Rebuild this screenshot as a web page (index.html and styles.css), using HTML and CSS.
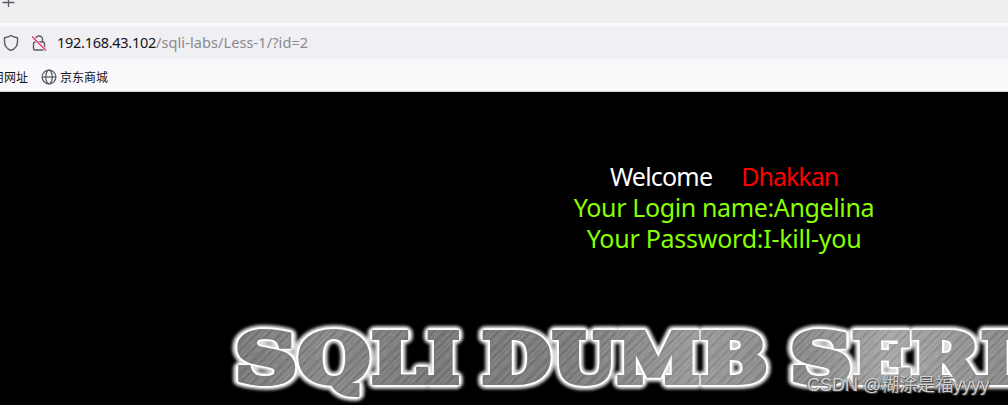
FILE: index.html
```html
<!DOCTYPE html>
<html lang="zh-CN">
<head>
<meta charset="utf-8">
<title>Less-1</title>
<link rel="stylesheet" href="styles.css">
</head>
<body>
<div class="window">
  <header class="tabs">
    <svg class="plus" width="16" height="10" viewBox="0 0 16 10"><path d="M2.500 2.500h12M8.500 -4v11" fill="none" stroke="#5b5b66" stroke-width="1.300"/></svg>
  </header>
  <div class="toolbar">
    <div class="urlbar">
      <svg class="shield" width="16" height="18" viewBox="0 0 16 18"><path d="M8 1.500C6.100 3 3.800 3.500 1.500 3.800V7.800C1.500 12 4 15 8 16.400C12 15 14.500 12 14.500 7.800V3.800C12.200 3.500 9.900 3 8 1.500Z" fill="none" stroke="#5b5b66" stroke-width="1.400" stroke-linejoin="round"/></svg>
      <svg class="lock" width="16" height="18" viewBox="0 0 16 18"><g fill="none" stroke="#5b5b66" stroke-width="1.400"><rect x="2.500" y="8" width="11" height="8" rx="1.500"/><path d="M4.500 8V5.500a3.500 3.500 0 0 1 7 0V8"/></g><path d="M1 2.500L15 16.500" stroke="#f2f0f5" stroke-width="3"/><path d="M1 2.500L15 16.500" stroke="#e8305a" stroke-width="1.300"/></svg>
      <div class="url"><span class="host">192.168.43.102</span><span class="path">/sqli-labs/Less-1/?id=2</span></div>
    </div>
  </div>
  <nav class="bookmarks">
    <span class="bookmark first">用网址</span>
    <svg class="globe" width="16" height="16" viewBox="0 0 16 16"><g fill="none" stroke="#5b5b66" stroke-width="1.300"><circle cx="8" cy="8" r="6.900"/><ellipse cx="8" cy="8" rx="3.200" ry="6.900"/><path d="M1 8h14"/></g></svg>
    <span class="bookmark">京东商城</span>
  </nav>
  <main class="page">
    <div class="greeting">
      <div class="line"><span class="welcome">Welcome</span><span class="name">Dhakkan</span></div>
      <div class="line login">Your Login name:Angelina</div>
      <div class="line password">Your Password:I-kill-you</div>
    </div>
    <svg class="banner" width="1008" height="95" viewBox="0 310 1008 95">
      <defs>
        <linearGradient id="base" gradientUnits="userSpaceOnUse" x1="230" y1="330" x2="1008" y2="385">
          <stop offset="0" stop-color="#777"/><stop offset=".12" stop-color="#868686"/><stop offset=".25" stop-color="#777"/><stop offset=".45" stop-color="#7c7c7c"/><stop offset=".6" stop-color="#999"/><stop offset=".72" stop-color="#858585"/><stop offset=".85" stop-color="#a5a5a5"/><stop offset="1" stop-color="#888"/>
        </linearGradient>
        <pattern id="brush" width="23" height="60" patternUnits="userSpaceOnUse" patternTransform="rotate(45)">
          <path d="M1 0v60M9.500 0v60M17 0v60" stroke="#fff" stroke-opacity=".13" stroke-width=".8"/>
          <path d="M3.500 0v60M12 0v60M20.500 0v60" stroke="#000" stroke-opacity=".1" stroke-width=".8"/>
          <path d="M6 0v60M14.500 0v60" stroke="#fff" stroke-opacity=".18" stroke-width=".5"/>
        </pattern>
        <filter id="glow" x="-5%" y="-30%" width="110%" height="160%"><feGaussianBlur stdDeviation="1.700"/></filter>
        <g id="title">
          <text x="235.500" y="382" textLength="61" lengthAdjust="spacingAndGlyphs">S</text>
          <text x="298.500" y="382" textLength="71" lengthAdjust="spacingAndGlyphs">Q</text>
          <text x="372" y="382" textLength="54.500" lengthAdjust="spacingAndGlyphs">L</text>
          <text x="427.500" y="382" textLength="31.500" lengthAdjust="spacingAndGlyphs">I</text>
          <text x="482.500" y="382" textLength="68" lengthAdjust="spacingAndGlyphs">D</text>
          <text x="553" y="382" textLength="63" lengthAdjust="spacingAndGlyphs">U</text>
          <text x="617.500" y="382" textLength="82" lengthAdjust="spacingAndGlyphs">M</text>
          <text x="700.500" y="382" textLength="66.500" lengthAdjust="spacingAndGlyphs">B</text>
          <text x="790.500" y="382" textLength="61" lengthAdjust="spacingAndGlyphs">S</text>
          <text x="852.500" y="382" textLength="58.500" lengthAdjust="spacingAndGlyphs">E</text>
          <text x="911.500" y="382" textLength="68" lengthAdjust="spacingAndGlyphs">R</text>
          <text x="981.500" y="382" textLength="31.500" lengthAdjust="spacingAndGlyphs">I</text>
        </g>
      </defs>
      <use href="#title" class="halo" filter="url(#glow)"/>
      <use href="#title" class="edge"/>
      <use href="#title" class="metal"/>
      <use href="#title" class="grain"/>
    </svg>
    <div class="watermark">CSDN @糊涂是福yyyy</div>
  </main>
</div>
</body>
</html>
```
FILE: styles.css
```css
* { box-sizing: border-box; }
body { margin: 0; background: #000; overflow: hidden; }
.window { width: 1008px; height: 405px; overflow: hidden; font-family: "Noto Sans", "Noto Sans CJK SC", sans-serif; }
svg { display: block; flex: none; }
.tabs { height: 23px; background: #efefef; }
.toolbar { height: 36px; padding-top: 4px; background: #f9f9fb; }
.urlbar { display: flex; align-items: center; height: 32px; background: #f0eff4; padding-left: 3px; }
.lock { margin-left: 12px; }
.url { margin-left: 10px; font-size: 14.5px; line-height: 30px; height: 32px; white-space: nowrap; }
.host { color: #15141a; letter-spacing: -0.28px; }
.path { color: #8a8990; letter-spacing: 0.09px; }
.bookmarks { display: flex; align-items: center; height: 33px; padding-top: 3px; background: #f9f9fb; border-bottom: 1px solid #d0d0d4; }
.bookmark { font: 12px/29px "Noto Sans CJK SC", sans-serif; color: #15141a; margin-left: 4px; white-space: nowrap; }
.bookmark.first { margin-left: -8px; margin-right: 13px; }
.bookmark:last-child { margin-left: 3px; }
.page { position: relative; height: 313px; background: #000; }
.greeting { width: 1448px; height: 218px; padding-top: 69px; text-align: center; font-size: 25px; line-height: 31px; }
.line { height: 31px; white-space: nowrap; }
.welcome { color: #fff; letter-spacing: -0.8px; margin-right: 29px; }
.name { color: #f00; letter-spacing: -1px; }
.login { color: #8f0; letter-spacing: -0.37px; }
.password { color: #8f0; letter-spacing: -0.25px; }
.banner { font: bold 67px "DejaVu Serif", serif; }
.halo { fill: #fff; stroke: #ddd; stroke-width: 14px; stroke-linejoin: round; }
.edge { fill: #fff; stroke: #fff; stroke-width: 9.5px; stroke-linejoin: round; }
.metal { fill: url(#base); stroke: url(#base); stroke-width: 6px; }
.grain { fill: url(#brush); stroke: url(#brush); stroke-width: 6px; }
.watermark { position: absolute; left: 807px; top: 281px; font: 18px/24px "Liberation Sans", "Noto Sans CJK SC", sans-serif; color: rgba(222, 222, 222, .9); text-shadow: 1px 1px 1px #444, -1px 0 1px #777; white-space: nowrap; }
```
